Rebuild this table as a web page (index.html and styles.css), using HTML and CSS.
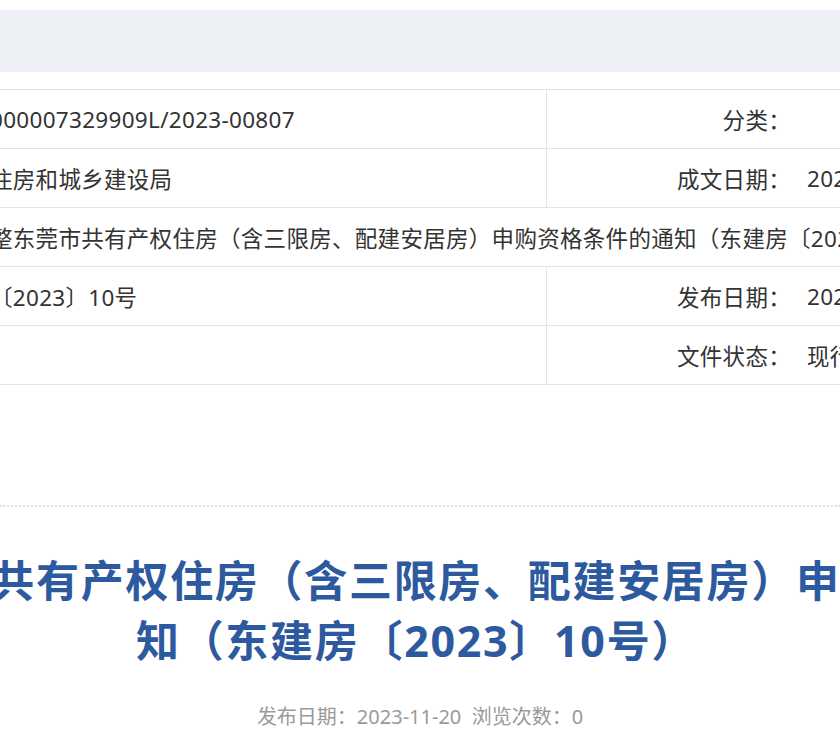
FILE: index.html
```html
<!DOCTYPE html>
<html lang="zh-CN">
<head>
<meta charset="utf-8">
<title>关于调整东莞市共有产权住房申购资格条件的通知</title>
<link rel="stylesheet" href="styles.css">
</head>
<body>
<div class="page">
  <div class="topbar"></div>

  <div class="info">
    <div class="row">
      <div class="cell val-left">000007329909L/2023-00807</div>
      <div class="cell label">分类：</div>
      <div class="cell val-right"></div>
    </div>
    <div class="row">
      <div class="cell val-left">住房和城乡建设局</div>
      <div class="cell label">成文日期：</div>
      <div class="cell val-right">2023-11-17</div>
    </div>
    <div class="row row-full">
      <div class="cell val-full">整东莞市共有产权住房（含三限房、配建安居房）申购资格条件的通知（东建房〔2023〕10号）</div>
    </div>
    <div class="row">
      <div class="cell val-left">〔2023〕10号</div>
      <div class="cell label">发布日期：</div>
      <div class="cell val-right">2023-11-20</div>
    </div>
    <div class="row">
      <div class="cell val-left"></div>
      <div class="cell label">文件状态：</div>
      <div class="cell val-right">现行有效</div>
    </div>
  </div>

  <div class="divider"></div>

  <div class="title-wrap">
    <h1 class="title">关于调整东莞市共有产权住房（含三限房、配建安居房）申购资格条件的通<br>知（东建房〔2023〕10号）</h1>
  </div>

  <div class="meta">发布日期：2023-11-20&nbsp;&nbsp;浏览次数：0</div>
</div>
</body>
</html>
```

FILE: styles.css
```css
html, body {
  margin: 0;
  padding: 0;
  background: #ffffff;
}

body {
  width: 840px;
  height: 752px;
  overflow: hidden;
  font-family: "Noto Sans", "Noto Sans CJK SC", sans-serif;
  color: #333333;
}

.page {
  width: 840px;
  overflow: hidden;
}

.topbar {
  margin-top: 10px;
  height: 62px;
  background: #edf0f4;
}

.info {
  margin-top: 17px;
  margin-left: -10px;
  width: 1100px;
  border-top: 1px solid #e2e4e8;
}

.row {
  display: grid;
  grid-template-columns: 557px 244px 1fr;
  height: 59px;
  box-sizing: border-box;
  border-bottom: 1px solid #e2e4e8;
}

.row-full {
  grid-template-columns: 1fr;
}

.cell {
  display: flex;
  align-items: center;
  font-size: 22.5px;
  letter-spacing: 0.3px;
  white-space: nowrap;
  overflow: hidden;
}

.val-left {
  border-right: 1px solid #e2e4e8;
}

.label {
  justify-content: flex-end;
}

.val-right {
  padding-left: 16px;
}

.divider {
  margin-top: 120px;
  border-top: 2px dotted #e0e0e0;
}

.title-wrap {
  width: 2000px;
  margin-left: -584px;
  margin-top: 44px;
}

.title {
  margin: 0;
  text-align: center;
  font-size: 43px;
  letter-spacing: 1.7px;
  line-height: 60px;
  font-weight: 700;
  color: #2d5a9f;
}

.meta {
  margin-top: 30px;
  text-align: center;
  font-size: 20px;
  color: #9a9a9a;
}
```
